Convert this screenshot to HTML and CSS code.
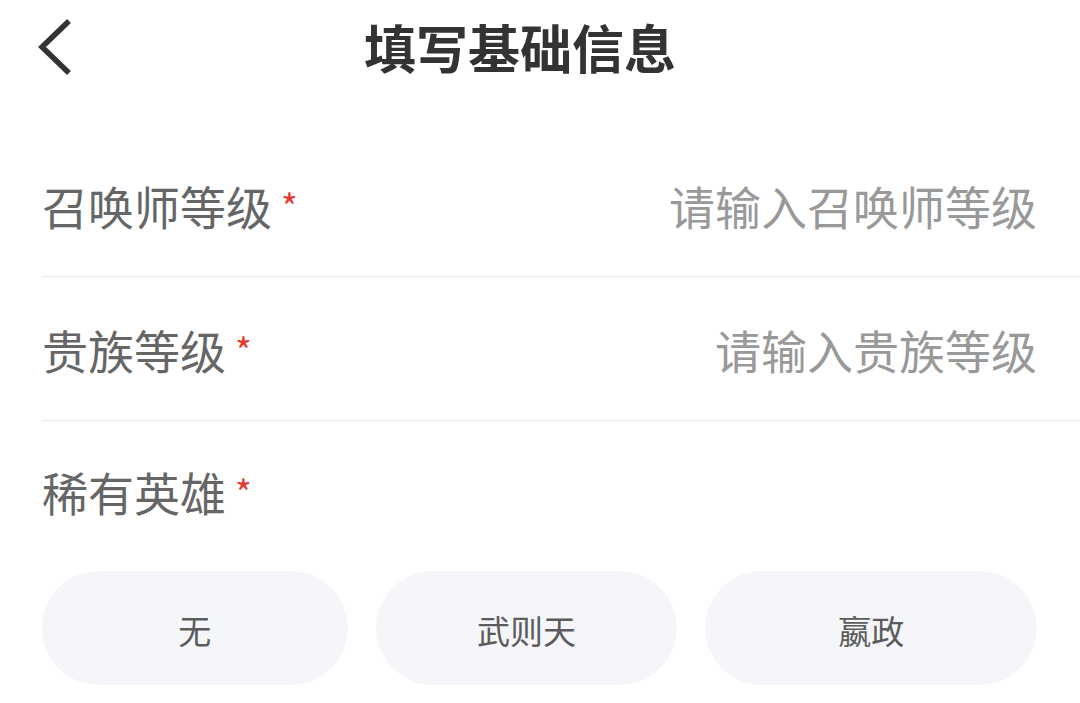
FILE: index.html
```html
<!DOCTYPE html>
<html lang="zh-CN">
<head>
  <meta charset="UTF-8">
  <meta name="viewport" content="width=device-width, initial-scale=1.0">
  <title>填写基础信息</title>
  <link rel="stylesheet" href="styles.css">
</head>
<body>
  <div class="page">
    <header class="nav-bar">
      <button type="button" class="back-btn" aria-label="返回">
        <svg viewBox="0 0 40 60" width="40" height="60">
          <path d="M29 7 L4 31 L29 55" fill="none" stroke="#333" stroke-width="5.5" stroke-linecap="square" stroke-linejoin="miter"/>
        </svg>
      </button>
      <h1 class="nav-title">填写基础信息</h1>
    </header>

    <div class="form">
      <div class="field">
        <label class="field-label" for="summonerLevel">召唤师等级<span class="required">*</span></label>
        <input type="text" id="summonerLevel" class="field-input" placeholder="请输入召唤师等级" />
      </div>
      <div class="field">
        <label class="field-label" for="nobleLevel">贵族等级<span class="required">*</span></label>
        <input type="text" id="nobleLevel" class="field-input" placeholder="请输入贵族等级" />
      </div>
      <div class="field field-block">
        <div class="field-label">稀有英雄<span class="required">*</span></div>
        <div class="option-grid">
          <button type="button" class="option">无</button>
          <button type="button" class="option">武则天</button>
          <button type="button" class="option">嬴政</button>
        </div>
      </div>
    </div>
  </div>
</body>
</html>
```

FILE: styles.css
```css
body {
  margin: 0;
  background: #fff;
  font-family: "Noto Sans CJK SC", "Noto Sans", sans-serif;
  color: #333;
}
.page {
  width: 100%;
  min-height: 100vh;
}
.nav-bar {
  position: relative;
  height: 94px;
  display: flex;
  align-items: center;
  justify-content: center;
}
.back-btn {
  position: absolute;
  left: 38px;
  top: 16px;
  width: 40px;
  height: 60px;
  padding: 0;
  border: none;
  background: none;
  cursor: pointer;
}
.back-btn svg {
  display: block;
}
.nav-title {
  margin: 0 40px 0 0;
  font-size: 52px;
  line-height: 94px;
  font-weight: 700;
  color: #333;
}
.form {
  padding: 39px 0 0 42px;
}
.field {
  display: flex;
  align-items: center;
  height: 144px;
  padding: 0 43px 0 0;
  box-sizing: border-box;
  border-bottom: 1px solid #e8e8e8;
}
.field-label {
  font-size: 46px;
  line-height: 46px;
  color: #666;
  white-space: nowrap;
}
.required {
  display: inline-block;
  margin-left: 9px;
  font-size: 36px;
  line-height: 46px;
  vertical-align: top;
  color: #e4392b;
}
.field-input {
  flex: 1;
  min-width: 0;
  border: none;
  outline: none;
  padding: 0;
  background: none;
  text-align: right;
  font-family: inherit;
  font-size: 46px;
  line-height: 60px;
  color: #333;
}
.field-input::placeholder {
  color: #999;
}
.field-block {
  display: block;
  height: auto;
  padding: 47px 43px 0 0;
  border-bottom: none;
}
.option-grid {
  display: grid;
  grid-template-columns: 306fr 302fr 332fr;
  gap: 28px;
  margin-top: 57px;
}
.option {
  height: 114px;
  padding: 4px 0 0;
  border: none;
  border-radius: 57px;
  background: #f5f6f9;
  font-family: inherit;
  font-size: 33px;
  color: #5c5c5c;
  cursor: pointer;
}
```
